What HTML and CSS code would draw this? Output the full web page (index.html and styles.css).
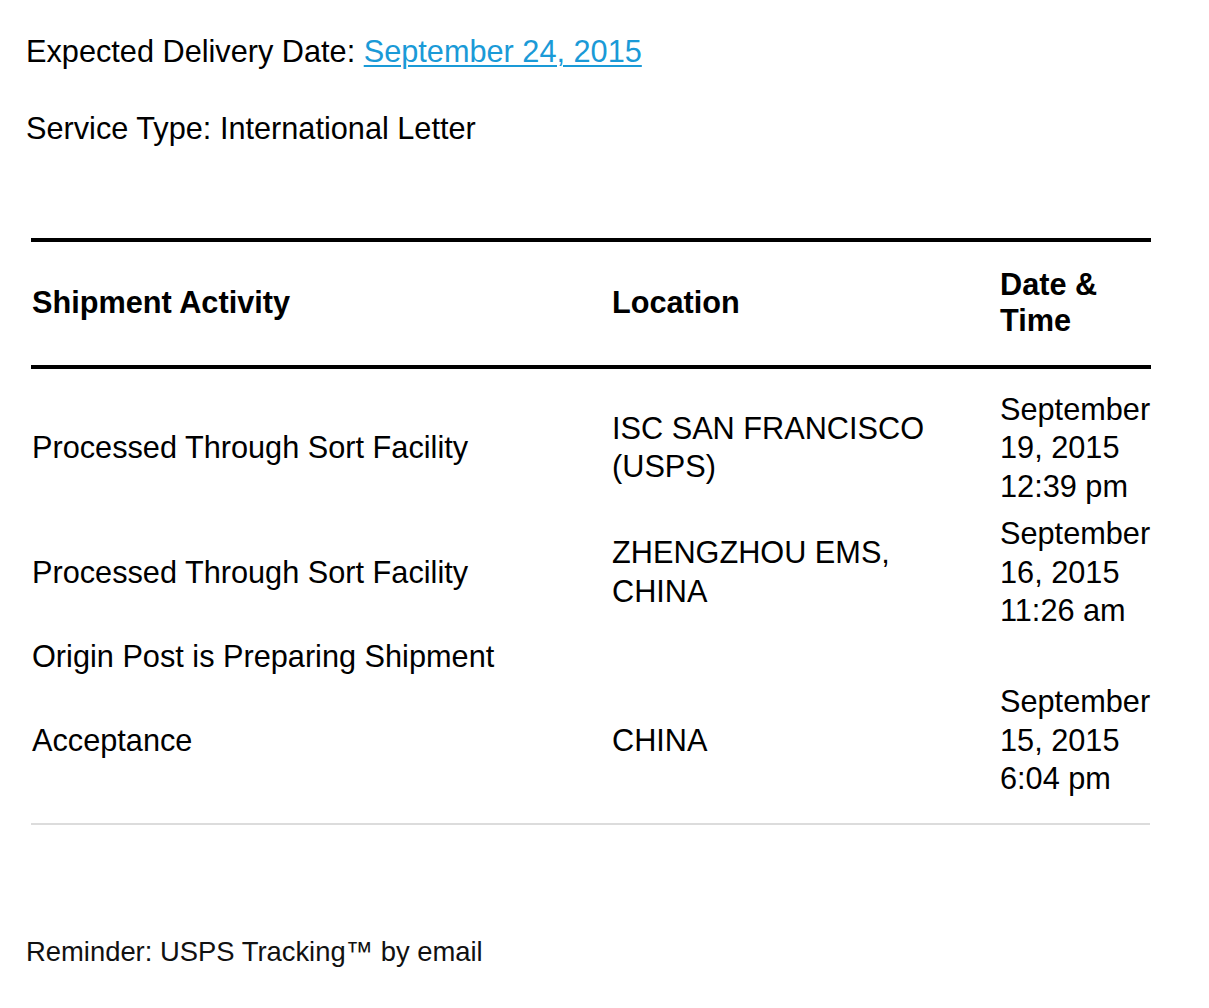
FILE: index.html
```html
<!DOCTYPE html>
<html lang="en">
<head>
<meta charset="utf-8">
<title>USPS Tracking</title>
<link rel="stylesheet" href="styles.css">
</head>
<body>
<div class="page">
  <p class="info">Expected Delivery Date: <a class="link" href="#">September 24, 2015</a></p>
  <p class="info">Service Type: International Letter</p>

  <table class="track">
    <colgroup>
      <col class="c-activity">
      <col class="c-location">
      <col class="c-date">
    </colgroup>
    <thead>
      <tr>
        <th class="col-a">Shipment Activity</th>
        <th class="col-b">Location</th>
        <th class="col-c">Date &amp; Time</th>
      </tr>
    </thead>
    <tbody>
      <tr class="first">
        <td class="col-a">Processed Through Sort Facility</td>
        <td class="col-b">ISC SAN FRANCISCO (USPS)</td>
        <td class="col-c">September 19, 2015 12:39 pm</td>
      </tr>
      <tr>
        <td class="col-a">Processed Through Sort Facility</td>
        <td class="col-b">ZHENGZHOU EMS, CHINA</td>
        <td class="col-c">September 16, 2015 11:26 am</td>
      </tr>
      <tr class="compact">
        <td class="col-a">Origin Post is Preparing Shipment</td>
        <td class="col-b"></td>
        <td class="col-c"></td>
      </tr>
      <tr>
        <td class="col-a">Acceptance</td>
        <td class="col-b">CHINA</td>
        <td class="col-c">September 15, 2015 6:04 pm</td>
      </tr>
    </tbody>
  </table>
  <div class="divider"></div>

  <p class="reminder">Reminder: USPS Tracking™ by email</p>
</div>
</body>
</html>
```

FILE: styles.css
```css
html, body {
  margin: 0;
  padding: 0;
  background: #ffffff;
}

body {
  font-family: "Liberation Sans", Arial, Helvetica, sans-serif;
  color: #000000;
}

.page {
  padding: 33px 0 0 26px;
}

.info {
  margin: 0 0 38.5px 0;
  font-size: 30.7px;
  line-height: 38.5px;
}

.link {
  color: #1a9ad7;
  text-decoration: underline;
  text-decoration-thickness: 2px;
  text-underline-offset: 3px;
}

.track {
  margin: 89px 0 0 5px;
  width: 1120px;
  table-layout: fixed;
  border-collapse: collapse;
  font-size: 30.7px;
}

.c-activity { width: 581px; }
.c-location { width: 388px; }
.c-date { width: 151px; }

.track th {
  text-align: left;
  font-weight: bold;
  line-height: 36px;
  padding: 25px 0 26px 0;
  vertical-align: middle;
  border-top: 4px solid #000;
  border-bottom: 4px solid #000;
}

.track td {
  line-height: 38.5px;
  padding: 4.5px 0;
  vertical-align: middle;
}

.track tr.first td {
  padding-top: 22px;
}

.track tr.compact td {
  padding-top: 2.5px;
  padding-bottom: 2.5px;
}

.col-a {
  padding-left: 1px !important;
}

.col-b {
  padding-right: 30px !important;
}

.divider {
  margin: 20px 0 0 5px;
  width: 1119px;
  height: 2px;
  background: #dcdcdc;
}

.reminder {
  margin: 108px 0 0 0;
  font-size: 27.4px;
  line-height: 38px;
  color: #111;
}
```
